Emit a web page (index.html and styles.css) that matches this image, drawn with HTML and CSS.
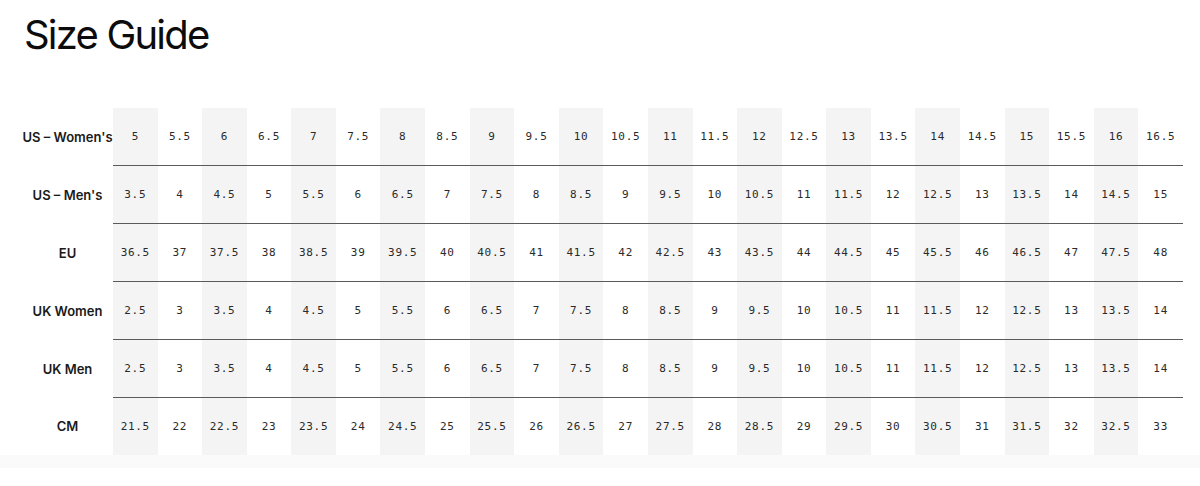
FILE: index.html
```html
<!DOCTYPE html>
<html lang="en">
<head>
<meta charset="utf-8">
<title>Size Guide</title>
<link rel="stylesheet" href="styles.css">
</head>
<body>
<main class="page">
  <h1 class="title">Size Guide</h1>
  <div class="table-wrap">
    <table class="sizes">
      <colgroup><col class="col-label"></colgroup>
      <tbody>
        <tr><th>US – Women's</th><td>5</td><td>5.5</td><td>6</td><td>6.5</td><td>7</td><td>7.5</td><td>8</td><td>8.5</td><td>9</td><td>9.5</td><td>10</td><td>10.5</td><td>11</td><td>11.5</td><td>12</td><td>12.5</td><td>13</td><td>13.5</td><td>14</td><td>14.5</td><td>15</td><td>15.5</td><td>16</td><td>16.5</td></tr>
        <tr><th>US – Men's</th><td>3.5</td><td>4</td><td>4.5</td><td>5</td><td>5.5</td><td>6</td><td>6.5</td><td>7</td><td>7.5</td><td>8</td><td>8.5</td><td>9</td><td>9.5</td><td>10</td><td>10.5</td><td>11</td><td>11.5</td><td>12</td><td>12.5</td><td>13</td><td>13.5</td><td>14</td><td>14.5</td><td>15</td></tr>
        <tr><th>EU</th><td>36.5</td><td>37</td><td>37.5</td><td>38</td><td>38.5</td><td>39</td><td>39.5</td><td>40</td><td>40.5</td><td>41</td><td>41.5</td><td>42</td><td>42.5</td><td>43</td><td>43.5</td><td>44</td><td>44.5</td><td>45</td><td>45.5</td><td>46</td><td>46.5</td><td>47</td><td>47.5</td><td>48</td></tr>
        <tr><th>UK Women</th><td>2.5</td><td>3</td><td>3.5</td><td>4</td><td>4.5</td><td>5</td><td>5.5</td><td>6</td><td>6.5</td><td>7</td><td>7.5</td><td>8</td><td>8.5</td><td>9</td><td>9.5</td><td>10</td><td>10.5</td><td>11</td><td>11.5</td><td>12</td><td>12.5</td><td>13</td><td>13.5</td><td>14</td></tr>
        <tr><th>UK Men</th><td>2.5</td><td>3</td><td>3.5</td><td>4</td><td>4.5</td><td>5</td><td>5.5</td><td>6</td><td>6.5</td><td>7</td><td>7.5</td><td>8</td><td>8.5</td><td>9</td><td>9.5</td><td>10</td><td>10.5</td><td>11</td><td>11.5</td><td>12</td><td>12.5</td><td>13</td><td>13.5</td><td>14</td></tr>
        <tr><th>CM</th><td>21.5</td><td>22</td><td>22.5</td><td>23</td><td>23.5</td><td>24</td><td>24.5</td><td>25</td><td>25.5</td><td>26</td><td>26.5</td><td>27</td><td>27.5</td><td>28</td><td>28.5</td><td>29</td><td>29.5</td><td>30</td><td>30.5</td><td>31</td><td>31.5</td><td>32</td><td>32.5</td><td>33</td></tr>
      </tbody>
    </table>
  </div>
  <div class="scroll-edge"></div>
</main>
</body>
</html>
```

FILE: styles.css
```css
html, body {
  margin: 0;
  padding: 0;
  background: #ffffff;
}

.page {
  font-family: Inter, "Liberation Sans", sans-serif;
  color: #111111;
}

.title {
  margin: 0;
  padding: 11px 0 0 24px;
  font-family: Inter, "Liberation Sans", sans-serif;
  font-weight: 400;
  font-size: 40px;
  line-height: 48px;
  letter-spacing: -1.8px;
  color: #0c0c0c;
}

.table-wrap {
  padding: 49px 0 0 22px;
}

.sizes {
  table-layout: fixed;
  width: 1161px;
  border-collapse: collapse;
  border-spacing: 0;
}

.col-label {
  width: 91px;
}

.sizes th {
  height: 57px;
  padding: 0;
  text-align: center;
  font-family: Inter, "Liberation Sans", sans-serif;
  font-weight: 600;
  font-size: 13px;
  letter-spacing: 0;
  color: #1a1a1a;
  white-space: nowrap;
}

.sizes td {
  height: 57px;
  padding: 0;
  text-align: center;
  font-family: "DejaVu Sans Mono", "Liberation Mono", monospace;
  font-size: 11px;
  letter-spacing: 0.7px;
  color: #2a2a2a;
  border-bottom: 1.5px solid #5a5a5a;
}

.sizes td:nth-child(even) {
  background: #f4f4f4;
}

.sizes tr:last-child td {
  border-bottom: none;
}

.scroll-edge {
  height: 13px;
  background: #fafafa;
}
```
